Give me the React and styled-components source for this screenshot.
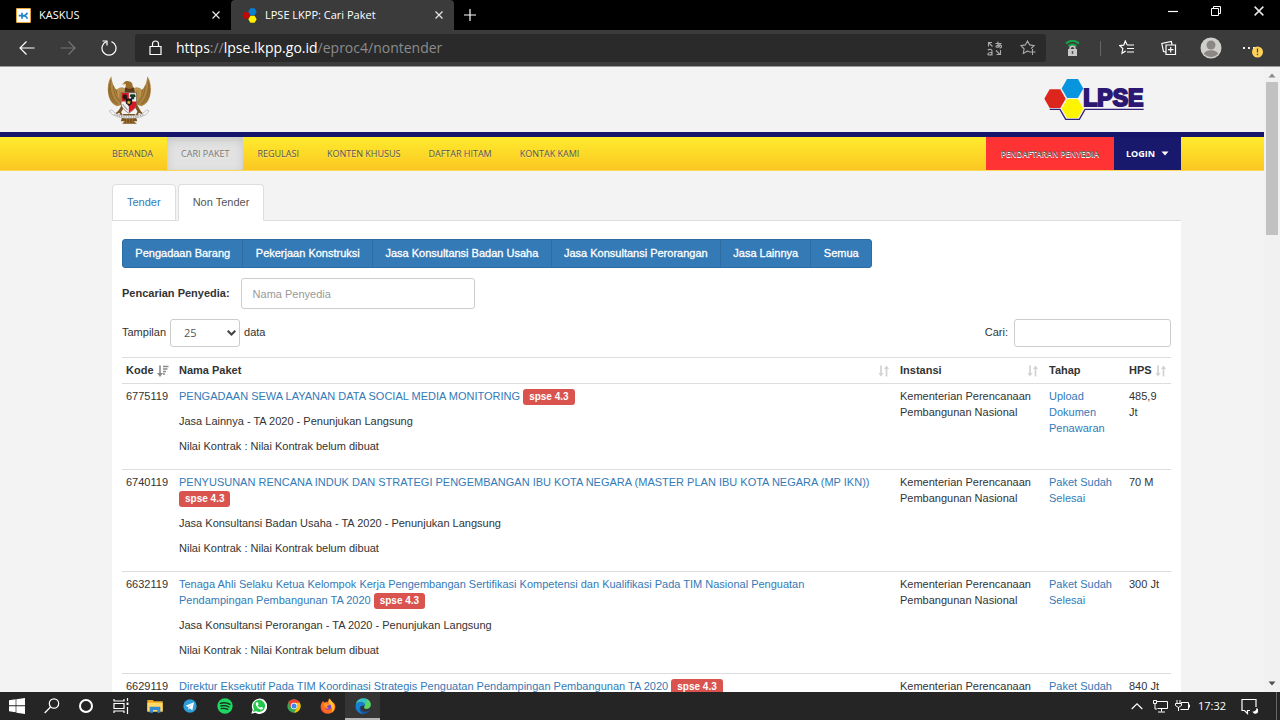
import React from "react";
import styled, { createGlobalStyle } from "styled-components";

const GlobalStyle = createGlobalStyle`
  *, *::before, *::after { box-sizing: border-box; }
  body { margin: 0; background: #f3f3f3; }
  button, input, select { font: inherit; color: inherit; margin: 0; }
  a { color: #337ab7; text-decoration: none; }
`;

const ui = `"Open Sans", "Noto Sans", sans-serif`;
const sans = `"Liberation Sans", Arial, sans-serif`;

/* ---------- browser chrome ---------- */

const Desktop = styled.div`
  display: flex;
  flex-direction: column;
  height: 100vh;
  overflow: hidden;
  font-family: ${sans};
  font-size: 11px;
  line-height: 16px;
  color: #333;
`;

const TitleBar = styled.div`
  display: flex;
  flex: none;
  height: 30px;
  background: #000;
  color: #fff;
  font-family: ${ui};
`;

const BrowserTab = styled.div`
  display: flex;
  align-items: center;
  gap: 8px;
  width: ${(p) => p.$width}px;
  padding: 0 8px 0 ${(p) => (p.$active ? 11 : 16)}px;
  background: ${(p) => (p.$active ? "#3b3b3b" : "#000")};
  border-radius: 4px 4px 0 0;

  span { flex: 1; white-space: nowrap; }
`;

const PlainButton = styled.button`
  display: inline-flex;
  align-items: center;
  justify-content: center;
  flex: none;
  width: ${(p) => p.$width}px;
  height: ${(p) => p.$height || 30}px;
  padding: 0;
  border: 0;
  background: none;
  color: #fff;
`;

const WindowButtons = styled.div`
  display: flex;
  margin-left: auto;
  height: 22px;
`;

const Toolbar = styled.div`
  display: flex;
  align-items: center;
  flex: none;
  height: 37px;
  padding: 0 6px;
  background: #3b3b3b;
  border-bottom: 1px solid #9a9a9a;
`;

const AddressBar = styled.div`
  display: flex;
  align-items: center;
  flex: 1;
  height: 28px;
  margin-left: 6px;
  padding-left: 12px;
  padding-right: 1px;
  background: #2a2a2a;
  border-radius: 3px;
`;

const Url = styled.div`
  flex: 1;
  margin-left: 12px;
  font-family: ${ui};
  font-size: 14px;
  line-height: 20px;
  color: #8c8c8c;

  b { font-weight: 400; color: #fff; }
`;

const Divider = styled.div`
  width: 1px;
  height: 15px;
  margin: 0 5px 0 2px;
  background: #666;
`;

const Viewport = styled.div`
  display: flex;
  flex: 1;
  min-height: 0;
  background: #f3f3f3;
`;

const Page = styled.div`
  flex: 1;
  min-width: 0;
  overflow: hidden;
`;

const ScrollTrack = styled.div`
  display: flex;
  flex-direction: column;
  align-items: center;
  flex: none;
  width: 16px;
  padding: 6px 0;
  background: #f1f1f1;
`;

const ScrollThumb = styled.div`
  width: 12px;
  height: 153px;
  margin: 4px 0 auto;
  background: #c1c1c1;
`;

/* ---------- site ---------- */

const Container = styled.div`
  max-width: 1098px;
  margin: 0 auto;
`;

const Header = styled(Container)`
  display: flex;
  justify-content: space-between;
  height: 65px;
  padding: 8px 36px 0 24px;
`;

const Logo = styled.a`
  display: block;
  padding-top: ${(p) => p.$top || 0}px;

  svg { display: block; }
`;

const NavBar = styled.nav`
  height: 39px;
  border-top: 5px solid #15156b;
  border-bottom: 1px solid #fbd75a;
  background: linear-gradient(#ffeb2d, #fbc722);
`;

const NavInner = styled(Container)`
  display: flex;
  height: 33px;
  padding-left: 15px;
`;

const NavLink = styled.a`
  display: flex;
  align-items: center;
  padding: 0 14px;
  font-family: ${ui};
  font-size: 9px;
  color: ${(p) => (p.$active ? "#777" : "#555")};
  background: ${(p) => (p.$active ? "#e2e2e2" : "none")};
  box-shadow: ${(p) => (p.$active ? "inset 0 3px 8px rgba(0,0,0,.13)" : "none")};
  text-shadow: 0 1px 0 rgba(255, 255, 255, 0.4);
  white-space: nowrap;
`;

const RegisterLink = styled(NavLink)`
  justify-content: center;
  width: 128px;
  margin-left: auto;
  padding: 0;
  background: #f33;
  color: #666;
  font-size: 8px;
  font-weight: 600;
  text-shadow: 0 1px 0 #fff;
`;

const LoginButton = styled.button`
  display: flex;
  align-items: center;
  justify-content: center;
  gap: 6px;
  width: 67px;
  padding: 0;
  border: 0;
  background: #18186c;
  color: #fff;
  font-family: ${ui};
  font-size: 9px;
  font-weight: 700;
`;

const Content = styled(Container)`
  padding: 13px 0 0 29px;
`;

const Tabs = styled.div`
  display: flex;
  gap: 2px;
  border-bottom: 1px solid #ddd;
`;

const TabLink = styled.a`
  height: 37px;
  margin-bottom: -1px;
  padding: 9px 14px;
  background: #fff;
  border: 1px solid #ddd;
  border-bottom-color: ${(p) => (p.$active ? "#fff" : "#ddd")};
  border-radius: 4px 4px 0 0;
  color: ${(p) => (p.$active ? "#555" : "#337ab7")};
`;

const Panel = styled.main`
  padding: 18px 10px;
  background: #fff;
`;

const ButtonGroup = styled.div`
  display: flex;
  width: 750px;
  max-width: 100%;
`;

const GroupButton = styled.button`
  flex: 1 1 auto;
  height: 29px;
  padding: 0 8px 2px;
  background: #337ab7;
  border: 1px solid #2e6da4;
  color: #fff;
  -webkit-text-stroke: 0.3px #fff;

  & + & { margin-left: -1px; }
  &:first-child { border-radius: 3px 0 0 3px; }
  &:last-child { border-radius: 0 3px 3px 0; }
`;

const FieldRow = styled.div`
  display: flex;
  align-items: center;
  justify-content: space-between;
  margin-top: ${(p) => p.$top}px;
`;

const Field = styled.label`
  display: flex;
  align-items: center;
  gap: ${(p) => p.$gap}px;
  font-weight: ${(p) => (p.$bold ? 700 : 400)};
`;

const FieldText = styled.span`
  padding-bottom: 2px;
`;

const TextInput = styled.input`
  width: ${(p) => p.$width}px;
  height: ${(p) => p.$height}px;
  padding: 0 11px;
  background: #fff;
  border: 1px solid #ccc;
  border-radius: 3px;
  font-weight: 400;

  &::placeholder { color: #999; opacity: 1; }
`;

const SelectWrap = styled.span`
  position: relative;
  display: block;

  svg { position: absolute; right: 4px; top: 11px; pointer-events: none; }
`;

const Select = styled.select`
  display: block;
  appearance: none;
  width: 70px;
  height: 28px;
  padding: 0 13px;
  background: #fff;
  border: 1px solid #ccc;
  border-radius: 3px;
  color: #555;
  font-family: ${ui};
`;

const Table = styled.table`
  width: 100%;
  margin-top: 10px;
  table-layout: fixed;
  border-collapse: collapse;
`;

const Th = styled.th`
  width: ${(p) => (p.$width ? p.$width + "px" : "auto")};
  height: 26px;
  padding: 0 4px 1px;
  border-top: 1px solid #ddd;
  border-bottom: 1px solid #ddd;
  text-align: left;
`;

const HeadCell = styled.div`
  display: flex;
  justify-content: ${(p) => (p.$narrow ? "flex-start" : "space-between")};
  align-items: center;
  gap: 3px;
  margin-right: ${(p) => (p.$narrow ? 0 : 2)}px;

  svg { flex: none; margin-top: 1px; }
`;

const Td = styled.td`
  padding: 4px ${(p) => p.$right || 4}px 6px 4px;
  border-top: 1px solid #ddd;
  vertical-align: top;

  p { margin: 0 0 9px; }
`;

const Badge = styled.span`
  padding: 2px 6px 3px;
  background: #d9534f;
  border-radius: 3px;
  color: #fff;
  font-size: 10px;
  font-weight: 700;
  line-height: 10px;
  white-space: nowrap;
`;

/* ---------- taskbar ---------- */

const TaskBar = styled.footer`
  display: flex;
  justify-content: space-between;
  flex: none;
  height: 28px;
  background: #252525;
  color: #fff;
`;

const TaskIcons = styled.div`
  display: flex;
  width: 380px;
`;

const TaskButton = styled.button`
  display: flex;
  align-items: center;
  justify-content: center;
  flex: 1;
  padding: 0;
  border: 0;
  border-top: 2px solid transparent;
  border-bottom: 2px solid ${(p) => (p.$active ? "#b5b5b5" : "transparent")};
  background: ${(p) => (p.$active ? "#353535" : "none")};
`;

const Tray = styled.div`
  display: flex;
  align-items: center;
  font-family: ${ui};
  padding-right: 3px;
`;

const Clock = styled.time`
  width: 38px;
  text-align: center;
`;

const ShowDesktop = styled.div`
  width: 1px;
  height: 28px;
  margin-left: 8px;
  background: #666;
`;

/* ---------- drawings ---------- */

const Line = ({ size = 16, w = size, h = size, box, stroke = "#fff", sw = 1.2, children }) => (
  <svg width={w} height={h} viewBox={box || `0 0 ${w} ${h}`} fill="none" stroke={stroke} strokeWidth={sw} aria-hidden="true">
    {children}
  </svg>
);

const Cross = ({ size = 8 }) => (
  <Line size={size} box="0 0 8 8" stroke="#e8e8e8" sw={1.2}><path d="M.5.5l7 7M7.5.5l-7 7" /></Line>
);

const hex = (x, y, w = 64, h = 56) =>
  `${x},${y + h / 2} ${x + w / 4},${y} ${x + w * 0.75},${y} ${x + w},${y + h / 2} ${x + w * 0.75},${y + h} ${x + w / 4},${y + h}`;

const KaskusIcon = () => (
  <svg width="15" height="15" viewBox="0 0 45 45" aria-hidden="true">
    <rect x="1" y="1" width="43" height="43" rx="3" fill="#fff" stroke="#f0a020" strokeWidth="3" />
    <path d="M18 14v18M34 14c-2 6-7 9-15 9 8 0 13 3 15 9M8 23h12" stroke="#1f86c8" strokeWidth="5" fill="none" />
  </svg>
);

const LpseIcon = () => (
  <svg width="15" height="15" viewBox="0 0 45 45" aria-hidden="true">
    <polygon points={hex(1, 12, 23, 20)} fill="#c00808" />
    <polygon points={hex(19, 1, 25, 21)} fill="#0a7fd0" />
    <polygon points={hex(19, 23, 25, 21)} fill="#fff100" />
  </svg>
);

const LpseLogo = () => (
  <svg width="102" height="43" viewBox="250 36 306 129" role="img" aria-label="LPSE">
    <path d="M270 130H301L318 160H359L376 130H552" fill="none" stroke="#31217a" strokeWidth="4" />
    <polygon points={hex(254, 70)} fill="#dc251c" />
    <polygon points={hex(306, 39, 65, 57)} fill="#0795df" />
    <polygon points={hex(306, 99, 65, 57)} fill="#fff500" />
    <text x="371" y="121" fontFamily="Liberation Sans, Arial, sans-serif" fontSize="69" fontWeight="700" fill="#2a1872" stroke="#2a1872" strokeWidth="6">LPSE</text>
  </svg>
);

const Garuda = () => {
  const wing = (
    <g>
      <path d="M63 30C55 40 51 58 53 78c2 20 11 35 27 41l20-6-4-38c-8 2-18-2-24-13-6-10-8-21-9-32z" fill="#b08742" />
      <path d="M61 42c-4 22-1 48 22 72M57 52c-1 23 5 43 21 62M55 66c0 15 4 30 14 43M69 58c2 22 8 40 24 53M76 68c4 16 9 28 19 40" stroke="#7d5925" strokeWidth="2" fill="none" />
      <path d="M80 70c5-6 16-8 22-4l-2 46c-16-8-22-26-20-42z" fill="#c59b52" stroke="#8a642b" strokeWidth="1.5" />
      <path d="M88 72v28M94 70v36" stroke="#8a642b" strokeWidth="1.5" />
    </g>
  );
  return (
    <svg width="45" height="50" viewBox="50 26 134 149" role="img" aria-label="Garuda Pancasila">
      {wing}
      <g transform="translate(233 0) scale(-1 1)">{wing}</g>
      <path d="M98 142l-7 22h12l-8 7h44l-10-7h11l-6-22z" fill="#7c551f" />
      <path d="M108 144v26M117 144v28M126 144v26" stroke="#a07a3a" strokeWidth="2" />
      <path d="M96 112l-16 28 12-3 12-20zM138 112l16 28-12-3-12-20z" fill="#7a5422" />
      <path d="M106 62c-2-6 1-7 0-9l-11 1 7-7c6-6 20-3 23 4 2 6 1 10 6 15l-14 7-15-6z" fill="#9a6d2d" />
      <path d="M104 63l13 5 13-5 3 16h-31z" fill="#5d3b19" />
      <path d="M101 50l-7 4 9 2z" fill="#e0bd62" />
      <path d="M92 79h46v32c0 14-13 22-23 29-10-7-23-15-23-29z" fill="#f2f2f2" stroke="#3b2b1d" strokeWidth="1.5" />
      <path d="M93 80h22v25H93zM115 105h22v8c0 12-12 18-22 26z" fill="#d81924" />
      <path d="M97 86l6-3 7 4-1 10-8 3-5-7z" fill="#2a1616" />
      <path d="M122 98h9v-6l5-2-3-7h-13l-3 6 5 3z" fill="#163a23" />
      <path d="M106 96h19v14l-9 9-10-9z" fill="#171717" />
      <path d="M115 101l2 4 5 1-4 3 1 4-4-2-4 2 1-4-4-3 5-1z" fill="#e3ba35" />
      <path d="M97 114l14 16" stroke="#333" strokeWidth="3" strokeDasharray="2 2" />
      <path d="M57 133c6 14 30 22 59 22s53-8 59-22l-7-3c-8 11-24 17-52 17s-44-6-52-17z" fill="#f6f6f6" stroke="#888" strokeWidth="1.5" />
      <path d="M72 143c22 11 66 11 88 0" stroke="#777" strokeWidth="2.500" strokeDasharray="4 3" fill="none" />
      <path d="M78 141l9-8 7 13M154 141l-9-8-7 13" stroke="#80561f" strokeWidth="5" fill="none" />
    </svg>
  );
};

const SortIcon = ({ desc }) =>
  desc ? (
    <svg width="12" height="12" viewBox="0 0 12 12" fill="none" stroke="#8b8b8b" strokeWidth="1.6" aria-hidden="true">
      <path d="M3 .5v9M6 1.5h5.5M6 4h4.5M6 6.5h3M6 9h2" />
      <path d="M0 8h6l-3 4z" fill="#8b8b8b" stroke="none" />
    </svg>
  ) : (
    <svg width="12" height="12" viewBox="0 0 12 12" fill="none" stroke="#d2d2d2" strokeWidth="1.7" aria-hidden="true">
      <path d="M3 .5v8M8.500 3.500v8" />
      <path d="M.5 8h5L3 11.500zM6 4h5L8.500.5z" fill="#d2d2d2" stroke="none" />
    </svg>
  );

const Triangle = ({ down, color = "#8a8a8a" }) => (
  <svg width="8" height="5" viewBox="0 0 8 5" aria-hidden="true">
    <path d={down ? "M.5.5h7L4 4.500z" : "M.5 4.500h7L4 .5z"} fill={color} />
  </svg>
);

const taskIcons = [
  ["Start", <svg width="16" height="16" viewBox="0 0 48 48" fill="#fff"><path d="M0 7l20-3v18H0zM22 4l26-4v22H22zM0 25h20v18L0 40zM22 25h26v23l-26-4z" /></svg>],
  ["Search", <Line size={16}><circle cx="10" cy="5.500" r="4.700" /><path d="M6.500 9L.7 15" /></Line>],
  ["Cortana", <Line size={16} sw={2}><circle cx="8" cy="8" r="6" /></Line>],
  ["Task view", <Line size={16}><path d="M1 1v2h10V1M1 15v-2h10v2M1 5.500h10v5H1zM14.500 0v3M14.500 9v7" /><path d="M13.500 4.500h2v2.500h-2z" fill="#fff" stroke="none" /></Line>],
  ["Explorer", <svg width="16" height="14" viewBox="0 0 48 42"><path d="M1 3h16l4 4h26v30H1z" fill="#f0a91e" /><path d="M1 11h46v27H1z" fill="#ffd865" /><path d="M8 41V23h32v18h-9v-8H18v8z" fill="#348bd4" /></svg>],
  ["Telegram", <svg width="14" height="14" viewBox="0 0 42 42"><circle cx="21" cy="21" r="20" fill="#2da0dc" /><path d="M8 20l25-10-5 24-8-6-4 4-1-8z" fill="#fff" /><path d="M15 24l14-10-11 12-2 6z" fill="#a9cfe7" /></svg>],
  ["Spotify", <svg width="16" height="16" viewBox="0 0 48 48"><circle cx="24" cy="24" r="23" fill="#1ed760" /><path d="M10 16c10-3 20-2 29 3M12 24c8-2 17-1 24 3M13 32c7-2 13-1 19 2" fill="none" stroke="#1e2b22" strokeWidth="4" strokeLinecap="round" /></svg>],
  ["WhatsApp", <svg width="16" height="16" viewBox="0 0 48 48"><path d="M1 47l4-12A23 23 0 1 1 13 44z" fill="#fff" /><path d="M6 42l3-9a18 18 0 1 1 6 6z" fill="#25c84a" /><path d="M17 13c-5 3-3 10 3 16s13 8 17 2l-6-5-4 3c-3-1-6-4-7-7l3-3-3-6z" fill="#fff" /></svg>],
  ["Chrome", <svg width="14" height="14" viewBox="0 0 42 42"><circle cx="21" cy="21" r="20" fill="#34a853" /><path d="M3.700 11A20 20 0 0 1 38.300 11L21 21l-8.700 5z" fill="#ea4335" /><path d="M38.300 11A20 20 0 0 1 21 41l8.700-15L21 11z" fill="#fbbc05" /><circle cx="21" cy="21" r="9.500" fill="#fff" /><circle cx="21" cy="21" r="7.500" fill="#4285f4" /></svg>],
  ["Firefox", <svg width="16" height="16" viewBox="0 0 48 48"><path d="M10 8l2 6c4-2 9-3 13-2-1-5 1-9 4-11 1 6 6 8 10 13 4-1 6 5 7 11 1 13-9 22-22 22S2 38 2 26c0-7 3-14 8-18z" fill="#ff6a22" /><path d="M30 2c1 6 10 10 13 20 2 9-2 18-9 22 5-9 2-20-7-25-3-5-2-12 3-17z" fill="#ffc528" /><path d="M3 23c1 12 9 23 22 24-13 1-23-9-22-24z" fill="#ef255d" /><circle cx="24" cy="26" r="9" fill="#7d3bdd" /><path d="M11 16c5-2 9-1 13 2l7 1c-2 4-7 3-9 5s0 6 5 6c-5 5-16 1-16-14z" fill="#ff9825" /></svg>],
  ["Edge", <svg width="16" height="16" viewBox="0 0 48 48"><path d="M2 20C4 8 13 1 25 1c13 0 22 8 22 19 0 8-6 12-13 12-5 0-8-2-6-5 4-9-3-14-11-14S4 16 2 20z" fill="#35c1c9" /><path d="M33 3c9 3 14 9 14 17 0 8-6 12-13 12-5 0-8-2-6-5 5-6 9-16 5-24z" fill="#5dd65a" /><path d="M2 20c3-5 9-7 15-7 7 0 13 5 12 11-2-2-8-3-12 1-5 6-2 19 12 22C12 50-1 36 2 20z" fill="#1481d4" /><path d="M18 25c-5 8 3 18 14 16 6 0 10-3 12-5-4 9-12 12-19 11-11-3-15-15-7-22z" fill="#1358a8" /></svg>],
];

/* ---------- data ---------- */

const navItems = ["BERANDA", "CARI PAKET", "REGULASI", "KONTEN KHUSUS", "DAFTAR HITAM", "KONTAK KAMI"];
const categories = ["Pengadaan Barang", "Pekerjaan Konstruksi", "Jasa Konsultansi Badan Usaha", "Jasa Konsultansi Perorangan", "Jasa Lainnya", "Semua"];
const agency = "Kementerian Perencanaan Pembangunan Nasional";

const packages = [
  { code: "6775119", name: "PENGADAAN SEWA LAYANAN DATA SOCIAL MEDIA MONITORING", kind: "Jasa Lainnya", stage: "Upload Dokumen Penawaran", hps: "485,9 Jt" },
  { code: "6740119", name: "PENYUSUNAN RENCANA INDUK DAN STRATEGI PENGEMBANGAN IBU KOTA NEGARA (MASTER PLAN IBU KOTA NEGARA (MP IKN))", kind: "Jasa Konsultansi Badan Usaha", stage: "Paket Sudah Selesai", hps: "70 M" },
  { code: "6632119", name: "Tenaga Ahli Selaku Ketua Kelompok Kerja Pengembangan Sertifikasi Kompetensi dan Kualifikasi Pada TIM Nasional Penguatan Pendampingan Pembangunan TA 2020", kind: "Jasa Konsultansi Perorangan", stage: "Paket Sudah Selesai", hps: "300 Jt" },
  { code: "6629119", name: "Direktur Eksekutif Pada TIM Koordinasi Strategis Penguatan Pendampingan Pembangunan TA 2020", kind: "Jasa Konsultansi Perorangan", stage: "Paket Sudah Selesai", hps: "840 Jt" },
];

const columns = [
  { label: "Kode", width: 53, sort: "desc" },
  { label: "Nama Paket", sort: "both" },
  { label: "Instansi", width: 149, sort: "both" },
  { label: "Tahap", width: 80 },
  { label: "HPS", width: 46, sort: "both" },
];

function BrowserChrome() {
  return (
    <>
      <TitleBar>
        <BrowserTab $width={231}>
          <KaskusIcon />
          <span>KASKUS</span>
          <PlainButton $width={15} aria-label="Close tab"><Cross /></PlainButton>
        </BrowserTab>
        <BrowserTab $width={223} $active>
          <LpseIcon />
          <span>LPSE LKPP: Cari Paket</span>
          <PlainButton $width={15} aria-label="Close tab"><Cross /></PlainButton>
        </BrowserTab>
        <PlainButton $width={32} aria-label="New tab">
          <Line size={12}><path d="M6 0v12M0 6h12" /></Line>
        </PlainButton>
        <WindowButtons>
          <PlainButton $width={43} $height={22} aria-label="Minimize"><Line size={10}><path d="M0 5.500h10" /></Line></PlainButton>
          <PlainButton $width={43} $height={22} aria-label="Restore">
            <Line size={10} sw={1}><path d="M.5 2.500h7v7h-7zM2.500 2.500v-2h7v7h-2" /></Line>
          </PlainButton>
          <PlainButton $width={43} $height={22} aria-label="Close"><Cross size={10} /></PlainButton>
        </WindowButtons>
      </TitleBar>
      <Toolbar>
        <PlainButton $width={41} aria-label="Back"><Line w={16} h={14}><path d="M15.500 7H1M7.500.5L1 7l6.500 6.500" /></Line></PlainButton>
        <PlainButton $width={41} aria-label="Forward"><Line w={16} h={14} stroke="#757575"><path d="M.5 7H15M8.500.5L15 7l-6.500 6.500" /></Line></PlainButton>
        <PlainButton $width={41} aria-label="Refresh">
          <Line size={16}><path d="M10.500 1.600A7 7 0 1 1 5.500 1.600" /><path d="M1.500 1h4.500v4.500" /></Line>
        </PlainButton>
        <AddressBar>
          <Line w={17} h={16}><path d="M3 6.500h11v8H3zM5.500 6.500V4a3 3 0 0 1 6 0v2.500" /></Line>
          <Url><b>https</b>://<b>lpse.lkpp.go.id</b>/eproc4/nontender</Url>
          <PlainButton $width={34} aria-label="Translate">
            <Line size={15} stroke="#aaa" sw={1.1}>
              <path d="M1 1.500h4M1.500 1v4.500M1.500 1.500l4 4M8.500 2.500h6M11 .5c-.3 2 0 4.500.8 6M13.500 3.500c-1 3-4.500 3.500-4.500 2s4.500-2.500 5.500-.5c.5 1.500-1 2-2 2M.8 9c1.200-1 4.200-1 4.200 1v4.500M5 11.500c-5-.5-5 3-2.500 2.500 1.500 0 2.500-1 2.500-2M9 9.500l4 4M13.500 9v5M14 13.500H9.500" />
            </Line>
          </PlainButton>
          <PlainButton $width={34} aria-label="Add to favorites">
            <Line size={16} stroke="#aaa" sw={1.1}>
              <path d="M9.500 12L7.500 11 3.300 13.500l.8-4.700L.9 5.600l4.400-.7L7.500 1l2.200 3.900 4.400.7-2.900 2.900M12.500 9v6M9.500 12h6" />
            </Line>
          </PlainButton>
        </AddressBar>
        <PlainButton $width={52} aria-label="Secure connection">
          <svg width="15" height="16" viewBox="0 0 15 16" fill="none">
            <path d="M1 3.500c4-3.500 9-3.500 13 0M3.500 6.200c2.500-2 5.500-2 8 0" stroke="#17a24a" strokeWidth="2.200" />
            <path d="M5 10V8.800a2.500 2.500 0 0 1 5 0V10" stroke="#c9c9c9" strokeWidth="1.500" />
            <path d="M3 9h9v7H3z" fill="#c9c9c9" />
            <path d="M7.500 11v3" stroke="#555" strokeWidth="1.500" />
          </svg>
        </PlainButton>
        <Divider />
        <PlainButton $width={42} aria-label="Favorites">
          <Line size={16}><path d="M8 4.700L6.300 1 4.700 5.200.8 5.600l3 2.900-.8 4.700 3.700-2.300M8 5h7M8 8.500h7M8 12h7" /></Line>
        </PlainButton>
        <PlainButton $width={42} aria-label="Collections">
          <Line size={16}><path d="M5 5h9.500v9.500H5zM9.700 7v5.500M7 9.700h5.500M4.500 12L2.500 11.500.8 3.500l9.500-2 .7 3" /></Line>
        </PlainButton>
        <PlainButton $width={42} aria-label="Profile">
          <svg width="22" height="22" viewBox="0 0 22 22"><circle cx="11" cy="11" r="10.500" fill="#d0cecb" /><circle cx="11" cy="8" r="4.500" fill="#8a8785" /><path d="M4 17c1-5 13-5 14 0-4 4-10 4-14 0z" fill="#8a8785" /></svg>
        </PlainButton>
        <PlainButton $width={42} aria-label="Settings and more">
          <svg width="20" height="20" viewBox="0 0 20 20">
            <path d="M0 9h2v2H0zM5 9h2v2H5zM10 9h2v2h-2z" fill="#eee" />
            <circle cx="14.500" cy="14" r="5.500" fill="#ffd35a" /><path d="M14.500 10.500v4M14.500 15.800v1.400" stroke="#444" strokeWidth="1.300" />
          </svg>
        </PlainButton>
      </Toolbar>
    </>
  );
}

function PackageTable() {
  return (
    <Table>
      <thead>
        <tr>
          {columns.map((c) => (
            <Th key={c.label} $width={c.width} scope="col">
              <HeadCell $narrow={c.width === 53 || c.width === 46}>
                {c.label}
                {c.sort && <SortIcon desc={c.sort === "desc"} />}
              </HeadCell>
            </Th>
          ))}
        </tr>
      </thead>
      <tbody>
        {packages.map((p) => (
          <tr key={p.code}>
            <Td>{p.code}</Td>
            <Td $right={23}>
              <p><a href="#paket">{p.name}</a> <Badge>spse 4.3</Badge></p>
              <p>{p.kind} - TA 2020 - Penunjukan Langsung</p>
              <p>Nilai Kontrak : Nilai Kontrak belum dibuat</p>
            </Td>
            <Td>{agency}</Td>
            <Td><a href="#tahap">{p.stage}</a></Td>
            <Td>{p.hps}</Td>
          </tr>
        ))}
      </tbody>
    </Table>
  );
}

export default function App() {
  return (
    <Desktop>
      <GlobalStyle />
      <BrowserChrome />
      <Viewport>
        <Page>
          <Header as="header">
            <Logo href="#beranda"><Garuda /></Logo>
            <Logo href="#lpse" $top={3}><LpseLogo /></Logo>
          </Header>
          <NavBar>
            <NavInner>
              {navItems.map((item) => (
                <NavLink key={item} href="#menu" $active={item === "CARI PAKET"}>{item}</NavLink>
              ))}
              <RegisterLink href="#daftar">PENDAFTARAN PENYEDIA</RegisterLink>
              <LoginButton>LOGIN <Triangle down color="#fff" /></LoginButton>
            </NavInner>
          </NavBar>
          <Content>
            <Tabs>
              <TabLink href="#tender">Tender</TabLink>
              <TabLink href="#nontender" $active>Non Tender</TabLink>
            </Tabs>
            <Panel>
              <ButtonGroup>
                {categories.map((c) => <GroupButton key={c}>{c}</GroupButton>)}
              </ButtonGroup>
              <FieldRow $top={10}>
                <Field $gap={11} $bold>
                  <FieldText>Pencarian Penyedia:</FieldText>
                  <TextInput $width={234} $height={31} placeholder="Nama Penyedia" />
                </Field>
              </FieldRow>
              <FieldRow $top={10}>
                <Field $gap={4}>
                  <FieldText>Tampilan</FieldText>
                  <SelectWrap>
                    <Select defaultValue="25"><option>25</option><option>50</option><option>100</option></Select>
                    <Line w={9} h={6} stroke="#444" sw={2}><path d="M.7.7l3.800 3.800L8.300.7" /></Line>
                  </SelectWrap>
                  <FieldText>data</FieldText>
                </Field>
                <Field $gap={6}>
                  <FieldText>Cari:</FieldText>
                  <TextInput type="search" $width={157} $height={28} />
                </Field>
              </FieldRow>
              <PackageTable />
            </Panel>
          </Content>
        </Page>
        <ScrollTrack>
          <Triangle />
          <ScrollThumb />
          <Triangle down color="#505050" />
        </ScrollTrack>
      </Viewport>
      <TaskBar>
        <TaskIcons>
          {taskIcons.map(([name, icon]) => (
            <TaskButton key={name} aria-label={name} $active={name === "Edge"}>{icon}</TaskButton>
          ))}
        </TaskIcons>
        <Tray>
          <PlainButton $width={22} $height={28} aria-label="Hidden icons"><Line w={12} h={7}><path d="M.7 6L6 .9 11.300 6" /></Line></PlainButton>
          <PlainButton $width={23} $height={28} aria-label="Network">
            <Line w={16} h={13} sw={1}><path d="M4.500 1.500h11v7h-10M9.500 8.500v3M6 12h7M1.500.5h3v3h-3zM3 3.500v5.500h2" /></Line>
          </PlainButton>
          <PlainButton $width={22} $height={28} aria-label="Battery">
            <Line w={15} h={12} sw={1}><path d="M6 2.500h7.500v7h-8M14.500 4.500v3M2 0v3M5 0v3M.5 3.500h6v2l-3 2-3-2zM3.500 7v4" /></Line>
          </PlainButton>
          <Clock>17:32</Clock>
          <PlainButton $width={37} $height={28} aria-label="Notifications">
            <Line size={17}><path d="M9 12.500H6.500v3l-3-3H1v-11h14V9" /><path d="M15.500 10a3 3 0 1 1-4 3.500c2 .5 4-1 4-3.500z" fill="#fff" stroke="none" /></Line>
          </PlainButton>
          <ShowDesktop />
        </Tray>
      </TaskBar>
    </Desktop>
  );
}
